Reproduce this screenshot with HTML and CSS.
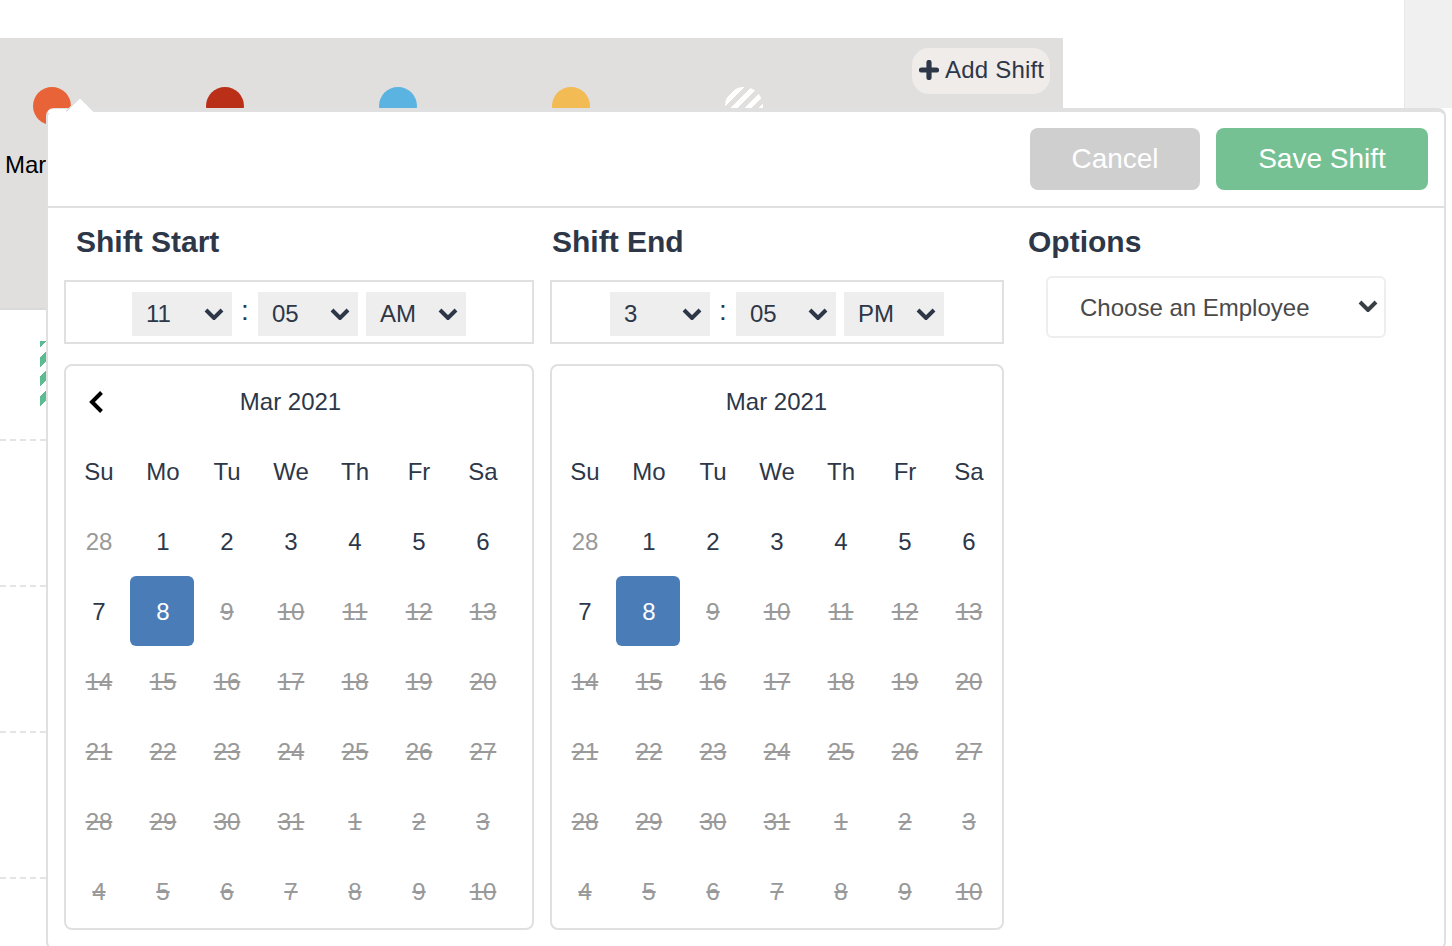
FILE: index.html
```html
<!DOCTYPE html>
<html lang="en">
<head>
<meta charset="utf-8">
<title>Add Shift</title>
<link rel="stylesheet" href="styles.css">
</head>
<body>
<div class="page">
  <main class="main">
    <section class="band">
      <div class="people">
        <div class="person"><span class="dot orange"></span><span class="name">Mar</span></div>
        <div class="person"><span class="dot red"></span></div>
        <div class="person"><span class="dot blue"></span></div>
        <div class="person"><span class="dot yellow"></span></div>
        <div class="person"><span class="dot striped"></span></div>
      </div>
      <button class="add-shift"><svg class="plus" viewBox="0 0 20 20"><path d="M10 2.5v15M2.5 10h15"/></svg>Add Shift</button>
    </section>
    <section class="lanes">
      <div class="lane first"><span class="ghost-shift"></span></div>
      <div class="lane"></div>
      <div class="lane"></div>
      <div class="lane"></div>
    </section>
  </main>
  <aside class="rail"></aside>
</div>

<div class="popover">
  <span class="arrow"></span>
  <header class="pop-head">
    <button class="btn cancel">Cancel</button>
    <button class="btn save">Save Shift</button>
  </header>
  <div class="pop-body">
    <section class="col col-start">
      <h2 class="title">Shift Start</h2>
      <div class="time">
        <div class="sel"><span>11</span><svg class="chev" viewBox="0 0 20 12"><path d="M2 2l8 8 8-8"/></svg></div>
        <span class="colon">:</span>
        <div class="sel"><span>05</span><svg class="chev" viewBox="0 0 20 12"><path d="M2 2l8 8 8-8"/></svg></div>
        <div class="sel ampm"><span>AM</span><svg class="chev" viewBox="0 0 20 12"><path d="M2 2l8 8 8-8"/></svg></div>
      </div>
      <div class="cal">
        <div class="grid">
          <div class="nav"><svg class="back" viewBox="0 0 16 24"><path d="M13.5 2.5L4 12l9.5 9.5"/></svg></div>
          <div class="month">Mar 2021</div>
          <div class="nav"></div>
          <div class="d">Su</div><div class="d">Mo</div><div class="d">Tu</div><div class="d">We</div><div class="d">Th</div><div class="d">Fr</div><div class="d">Sa</div>
          <div class="d old">28</div><div class="d">1</div><div class="d">2</div><div class="d">3</div><div class="d">4</div><div class="d">5</div><div class="d">6</div>
          <div class="d">7</div><div class="d on">8</div><div class="d off">9</div><div class="d off">10</div><div class="d off">11</div><div class="d off">12</div><div class="d off">13</div>
          <div class="d off">14</div><div class="d off">15</div><div class="d off">16</div><div class="d off">17</div><div class="d off">18</div><div class="d off">19</div><div class="d off">20</div>
          <div class="d off">21</div><div class="d off">22</div><div class="d off">23</div><div class="d off">24</div><div class="d off">25</div><div class="d off">26</div><div class="d off">27</div>
          <div class="d off">28</div><div class="d off">29</div><div class="d off">30</div><div class="d off">31</div><div class="d off">1</div><div class="d off">2</div><div class="d off">3</div>
          <div class="d off">4</div><div class="d off">5</div><div class="d off">6</div><div class="d off">7</div><div class="d off">8</div><div class="d off">9</div><div class="d off">10</div>
        </div>
      </div>
    </section>
    <section class="col col-end">
      <h2 class="title">Shift End</h2>
      <div class="time">
        <div class="sel"><span>3</span><svg class="chev" viewBox="0 0 20 12"><path d="M2 2l8 8 8-8"/></svg></div>
        <span class="colon">:</span>
        <div class="sel"><span>05</span><svg class="chev" viewBox="0 0 20 12"><path d="M2 2l8 8 8-8"/></svg></div>
        <div class="sel ampm"><span>PM</span><svg class="chev" viewBox="0 0 20 12"><path d="M2 2l8 8 8-8"/></svg></div>
      </div>
      <div class="cal">
        <div class="grid">
          <div class="nav"></div>
          <div class="month">Mar 2021</div>
          <div class="nav"></div>
          <div class="d">Su</div><div class="d">Mo</div><div class="d">Tu</div><div class="d">We</div><div class="d">Th</div><div class="d">Fr</div><div class="d">Sa</div>
          <div class="d old">28</div><div class="d">1</div><div class="d">2</div><div class="d">3</div><div class="d">4</div><div class="d">5</div><div class="d">6</div>
          <div class="d">7</div><div class="d on">8</div><div class="d off">9</div><div class="d off">10</div><div class="d off">11</div><div class="d off">12</div><div class="d off">13</div>
          <div class="d off">14</div><div class="d off">15</div><div class="d off">16</div><div class="d off">17</div><div class="d off">18</div><div class="d off">19</div><div class="d off">20</div>
          <div class="d off">21</div><div class="d off">22</div><div class="d off">23</div><div class="d off">24</div><div class="d off">25</div><div class="d off">26</div><div class="d off">27</div>
          <div class="d off">28</div><div class="d off">29</div><div class="d off">30</div><div class="d off">31</div><div class="d off">1</div><div class="d off">2</div><div class="d off">3</div>
          <div class="d off">4</div><div class="d off">5</div><div class="d off">6</div><div class="d off">7</div><div class="d off">8</div><div class="d off">9</div><div class="d off">10</div>
        </div>
      </div>
    </section>
    <section class="col col-options">
      <h2 class="title">Options</h2>
      <div class="employee"><span>Choose an Employee</span><svg class="chev" viewBox="0 0 20 12"><path d="M2 2l8 8 8-8"/></svg></div>
    </section>
  </div>
</div>
</body>
</html>
```
FILE: styles.css
```css
* { box-sizing: border-box; }
html, body { margin: 0; height: 100%; }
body {
  position: relative;
  overflow: hidden;
  background: #fff;
  color: #2d3748;
  font-family: "Liberation Sans", Arial, sans-serif;
  font-size: 24px;
}
.page { display: flex; height: 946px; }
.main { width: 1404px; padding-top: 38px; }
.rail { width: 48px; height: 108px; background: #f0f0f0; border-left: 1px solid #e8e8e8; }

/* Background schedule */
.band {
  position: relative;
  width: 1063px;
  height: 272px;
  background: #e0dfde;
  border-bottom: 2px solid #dadada;
  padding-top: 49px;
}
.people { display: flex; margin-left: -34px; }
.person { width: 173px; display: flex; flex-direction: column; align-items: center; flex: none; }
.dot { width: 38px; height: 38px; border-radius: 50%; flex: none; position: relative; left: -1px; }
.orange { background: #e96338; }
.red { background: #b92f17; }
.blue { background: #5ab3e0; }
.yellow { background: #f2bb53; }
.striped { background: repeating-linear-gradient(-45deg, #fff 0 5px, transparent 5px 10px); }
.name { margin-top: 26px; color: #000; line-height: 28px; align-self: flex-start; padding-left: 39px; }
.add-shift {
  position: absolute;
  top: 10px;
  left: 912px;
  width: 138px;
  height: 46px;
  display: flex;
  align-items: center;
  gap: 6px;
  padding: 0 0 2px 7px;
  border: 0;
  border-radius: 17px;
  background: #efecea;
  color: #2d3748;
  font: 24px "Liberation Sans", Arial, sans-serif;
  letter-spacing: .2px;
  white-space: nowrap;
}
.plus { width: 20px; height: 20px; margin-right: 0; fill: none; stroke: #2d3748; stroke-width: 5.2; stroke-linecap: round; flex: none; }

.lanes { width: 1063px; }
.lane { height: 146px; border-bottom: 2px dashed #e4e4e4; }
.lane.first { height: 131px; padding-top: 31px; }
.ghost-shift {
  display: block;
  margin-left: 40px;
  width: 60px;
  height: 65px;
  background: repeating-linear-gradient(-45deg, #5cbb90 0 7px, #fff 7px 14px);
}

/* Popover */
.popover {
  position: absolute;
  left: 46px;
  top: 108px;
  width: 1400px;
  height: 842px;
  background: #fff;
  border: 2px solid #e0e0e0;
  border-top-width: 4px;
  border-radius: 8px;
}
.popover::before {
  content: "";
  position: absolute;
  left: 0;
  top: -3px;
  width: 20px;
  height: 4px;
  background: #fff;
  border-top-left-radius: 6px;
}
.arrow {
  position: absolute;
  left: 22px;
  top: -11px;
  width: 20px;
  height: 20px;
  background: #fff;
  border-left: 1px solid #d4d4d4;
  border-top: 1px solid #d4d4d4;
  transform: rotate(45deg);
}
.pop-head {
  position: relative;
  height: 96px;
  padding: 16px 16px 0 0;
  display: flex;
  justify-content: flex-end;
  align-items: flex-start;
  gap: 16px;
  border-bottom: 2px solid #e0e0e0;
}
.btn {
  height: 62px;
  border: 0;
  border-radius: 8px;
  color: #fff;
  font: 28px "Liberation Sans", Arial, sans-serif;
}
.cancel { width: 170px; background: #cfcfcf; }
.save { width: 212px; background: #75c194; }

.pop-body { display: flex; padding-left: 16px; }
.col-start { width: 470px; margin-right: 16px; }
.col-end { width: 454px; margin-right: 24px; }
.col-options { width: 360px; }
.title {
  margin: 0;
  height: 68px;
  display: flex;
  align-items: center;
  font-size: 30px;
  font-weight: 700;
}
.col-start .title { padding-left: 12px; }
.col-end .title { padding-left: 2px; }

.time {
  height: 64px;
  margin-top: 4px;
  padding-top: 4px;
  display: flex;
  align-items: center;
  justify-content: center;
  border: 2px solid #e0e0e0;
}
.sel {
  width: 100px;
  height: 44px;
  display: flex;
  align-items: center;
  justify-content: space-between;
  padding: 0 8px 0 14px;
  background: #eee;
}
.ampm { margin-left: 8px; }
.colon { width: 26px; text-align: center; line-height: 38px; height: 44px; font-size: 28px; }
.chev { width: 20px; height: 12px; fill: none; stroke: #2d3748; stroke-width: 4; flex: none; }

.cal {
  margin-top: 20px;
  height: 566px;
  padding: 0 1px;
  border: 2px solid #e0e0e0;
  border-radius: 8px;
}
.grid {
  display: grid;
  grid-template-columns: repeat(7, 64px);
  grid-auto-rows: 70px;
}
.nav { display: flex; align-items: center; justify-content: center; padding-top: 2px; }
.back { width: 16px; height: 24px; margin-right: 6px; fill: none; stroke: #000; stroke-width: 4; }
.month { grid-column: span 5; display: flex; align-items: center; justify-content: center; padding: 2px 1px 0 0; }
.d { display: flex; align-items: center; justify-content: center; padding-top: 2px; }
.old { color: #999; }
.off { color: #999; text-decoration: line-through; }
.on { margin: 0 1px 0 -1px; padding-left: 2px; background: #4a7db8; color: #fff; border-radius: 6px; }

.employee {
  width: 340px;
  height: 62px;
  margin-left: 18px;
  display: flex;
  align-items: center;
  justify-content: space-between;
  padding: 2px 6px 0 32px;
  border: 2px solid #eee;
  border-radius: 6px;
  color: #4a4a4a;
}
.employee .chev { stroke: #3a3f46; margin-top: -4px; }
```
